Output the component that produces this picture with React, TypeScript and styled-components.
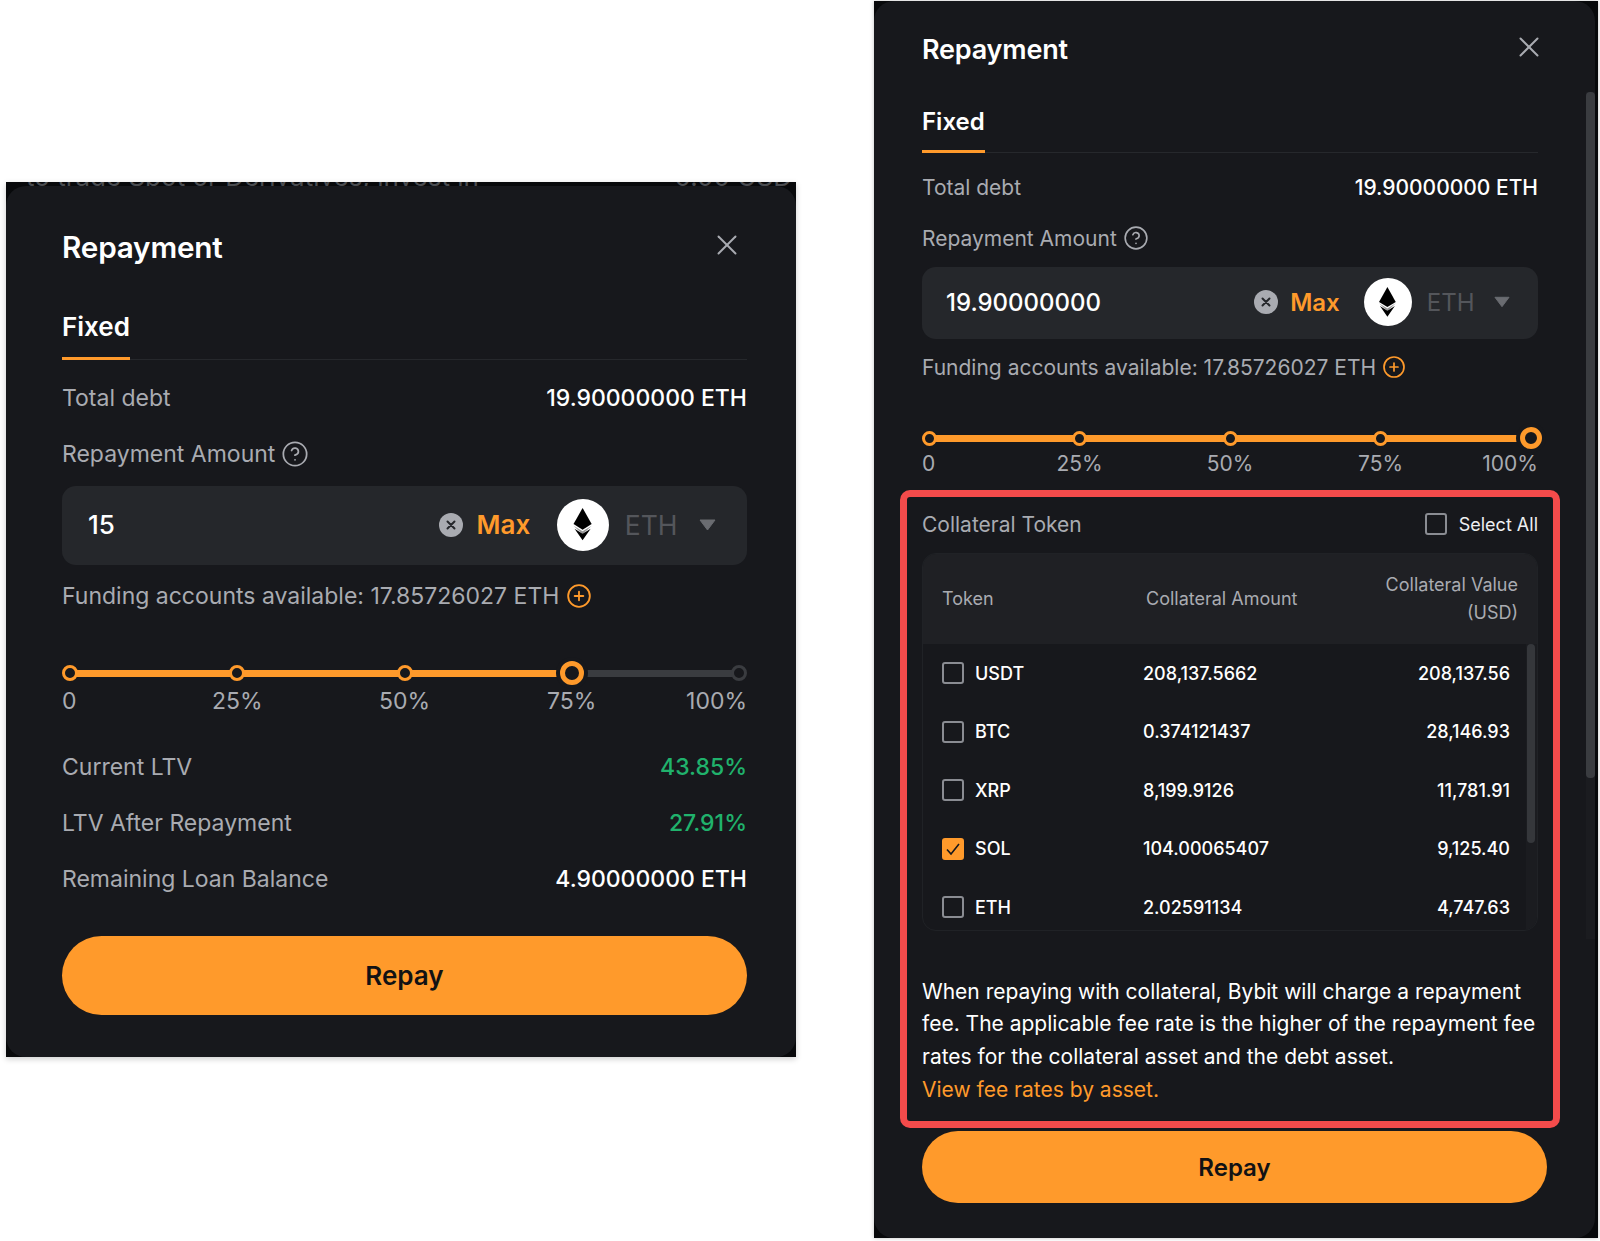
import { ThemeProvider, createGlobalStyle, styled } from "styled-components";
import { CircleHelp, CirclePlus, X } from "lucide-react";

const GlobalStyle = createGlobalStyle`
  html, body {
    margin: 0;
    background: #fff;
    font-family: Inter, "Liberation Sans", sans-serif;
  }
`;

const wide = {
  text: 23,
  title: 29.7,
  tab: 26,
  coinFont: 26.5,
  pad: "0 49px 42px 56px",
  rowH: 40,
  titleTop: 41,
  tabTop: 40,
  tabPad: 10,
  debtTop: 18,
  amountTop: 16,
  inputTop: 12,
  inputH: 79,
  inputPad: 26,
  inputRight: 31,
  clearGap: 13.5,
  maxGap: 26.5,
  coinGap: 16,
  nameGap: 21.5,
  caret: 17,
  fundTop: 11,
  fundGap: 7,
  sliderTop: 45,
  dot: 16,
  thumb: 24,
  sliderPad: 8,
  tickH: 30,
  tickShift: 2,
  icon: 52,
  btnH: 79,
  btnOver: 0,
  btnFont: 26,
  closeRight: 3,
};

const narrow = {
  ...wide,
  text: 21,
  title: 27,
  tab: 24,
  coinFont: 24,
  pad: "0 57px 35px 48px",
  rowH: 36,
  titleTop: 30,
  tabTop: 37,
  debtTop: 16,
  amountTop: 15,
  inputTop: 11,
  inputH: 72,
  inputPad: 24,
  inputRight: 28,
  clearGap: 12,
  maxGap: 24,
  coinGap: 15,
  nameGap: 19.5,
  caret: 16,
  fundTop: 10,
  fundGap: 6,
  sliderTop: 41,
  dot: 15,
  thumb: 22,
  sliderPad: 7,
  tickH: 26,
  tickShift: 0,
  icon: 48,
  btnH: 72,
  btnOver: 9,
  btnFont: 24,
  closeRight: -8,
};

const Page = styled.div`
  width: 1600px;
  height: 1241px;
  overflow: hidden;
  display: flex;
  align-items: flex-start;
`;

const LeftFrame = styled.div`
  margin: 182px 0 0 6px;
  width: 790px;
  padding-top: 4px;
  background: #08090b;
  position: relative;
  overflow: hidden;
  box-shadow: 0 2px 6px rgba(0, 0, 0, 0.2);
`;

const GhostText = styled.div`
  position: absolute;
  top: -20px;
  left: 20px;
  right: 4px;
  display: flex;
  justify-content: space-between;
  font-size: 26px;
  line-height: 30px;
  color: #4a4c50;
  white-space: nowrap;
`;

const RightFrame = styled.div`
  margin: 1px 0 0 78px;
  width: 724px;
  background: #08090b;
  position: relative;
  box-shadow: 0 0 4px rgba(0, 0, 0, 0.25);
`;

const Panel = styled.div`
  position: relative;
  background: #17181c;
  border-radius: 20px;
  padding: ${({ theme }) => theme.pad};
  color: #a9abb1;
  font-size: ${({ theme }) => theme.text}px;
`;

const RightPanel = styled(Panel)`
  margin-right: 3px;
`;

const PageScroll = styled.div`
  position: absolute;
  top: 91px;
  right: 3px;
  width: 9px;
  height: 847px;
  background: #1b1c20;
`;

const PageThumb = styled.div`
  height: 686px;
  border-radius: 4px;
  background: #3a3c40;
`;

const TitleRow = styled.div`
  display: flex;
  align-items: center;
  justify-content: space-between;
  height: ${({ theme }) => theme.rowH}px;
  padding-top: ${({ theme }) => theme.titleTop}px;
`;

const Title = styled.h2`
  margin: 0;
  font-size: ${({ theme }) => theme.title}px;
  font-weight: 600;
  letter-spacing: -0.2px;
  color: #fff;
`;

const CloseIcon = styled(X)`
  flex: none;
  margin: -4px ${({ theme }) => theme.closeRight}px 0 0;
  color: #a9abb1;
`;

const Tabs = styled.div`
  margin-top: ${({ theme }) => theme.tabTop}px;
  border-bottom: 1px solid #26282c;
  display: flex;
`;

const Tab = styled.div`
  height: ${({ theme }) => theme.rowH}px;
  line-height: ${({ theme }) => theme.rowH}px;
  padding-bottom: ${({ theme }) => theme.tabPad}px;
  border-bottom: 3px solid #ff9a2b;
  margin-bottom: -1px;
  font-size: ${({ theme }) => theme.tab}px;
  font-weight: 600;
  color: #fff;
`;

const Row = styled.div<{ $top?: number }>`
  display: flex;
  align-items: center;
  justify-content: space-between;
  height: ${({ theme }) => theme.rowH}px;
  margin-top: ${({ $top }) => $top ?? 16}px;
`;

const DebtRow = styled(Row)`
  margin-top: ${({ theme }) => theme.debtTop}px;
`;

const LabelRow = styled(Row)`
  justify-content: flex-start;
  gap: 6px;
  margin-top: ${({ theme }) => theme.amountTop}px;
`;

const Value = styled.span<{ $green?: boolean }>`
  font-weight: 500;
  color: ${({ $green }) => ($green ? "#20b26c" : "#fff")};
`;

const InputBox = styled.div`
  box-sizing: border-box;
  display: flex;
  align-items: center;
  height: ${({ theme }) => theme.inputH}px;
  margin-top: ${({ theme }) => theme.inputTop}px;
  padding: 0 ${({ theme }) => theme.inputRight}px 2px ${({ theme }) => theme.inputPad}px;
  background: #25272b;
  border-radius: 14px;
`;

const InputValue = styled.span`
  flex: 1;
  font-size: ${({ theme }) => theme.tab}px;
  font-weight: 500;
  color: #fff;
`;

const ClearDot = styled.svg`
  width: 24px;
  height: 24px;
  margin-right: ${({ theme }) => theme.clearGap}px;
`;

const MaxLink = styled.span`
  font-size: ${({ theme }) => theme.tab}px;
  font-weight: 600;
  color: #ff9a2b;
  margin-right: ${({ theme }) => theme.maxGap}px;
`;

const CoinBadge = styled.span`
  width: ${({ theme }) => theme.icon}px;
  height: ${({ theme }) => theme.icon}px;
  border-radius: 50%;
  background: #fff;
  display: flex;
  align-items: center;
  justify-content: center;
  margin-right: ${({ theme }) => theme.coinGap}px;
`;

const CoinName = styled.span`
  font-size: ${({ theme }) => theme.coinFont}px;
  color: #54565b;
  margin-right: ${({ theme }) => theme.nameGap}px;
`;

const Caret = styled.svg`
  width: ${({ theme }) => theme.caret}px;
  height: 12px;
`;

const FundRow = styled(Row)`
  justify-content: flex-start;
  gap: ${({ theme }) => theme.fundGap}px;
  margin-top: ${({ theme }) => theme.fundTop}px;
`;

const PlusIcon = styled(CirclePlus)`
  color: #ff9a2b;
`;

const Slider = styled.div`
  display: flex;
  align-items: center;
  height: 24px;
  margin-top: ${({ theme }) => theme.sliderTop}px;
  padding: 0 ${({ theme }) => theme.sliderPad}px;
`;

const Segment = styled.div<{ $on: boolean }>`
  flex: 1;
  height: 7px;
  background: ${({ $on }) => ($on ? "#ff9a2b" : "#3a3c40")};
`;

const Stop = styled.div`
  width: 0;
  display: flex;
  justify-content: center;
  position: relative;
  z-index: 1;
`;

const Dot = styled.div<{ $on: boolean; $thumb: boolean }>`
  flex: none;
  box-sizing: border-box;
  width: ${({ theme, $thumb }) => ($thumb ? theme.thumb : theme.dot)}px;
  height: ${({ theme, $thumb }) => ($thumb ? theme.thumb : theme.dot)}px;
  border-radius: 50%;
  background: #17181c;
  border: ${({ $thumb }) => ($thumb ? 5 : 3)}px solid ${({ $on }) => ($on ? "#ff9a2b" : "#3a3c40")};
  box-shadow: ${({ $thumb }) => ($thumb ? "0 0 0 4px #17181c" : "none")};
`;

const Ticks = styled.div`
  box-sizing: border-box;
  display: flex;
  justify-content: space-between;
  align-items: center;
  height: ${({ theme }) => theme.tickH}px;
  padding: ${({ theme }) => theme.tickShift}px ${({ theme }) => theme.sliderPad}px 0;
`;

const Tick = styled.span<{ $align: string }>`
  width: 0;
  display: flex;
  justify-content: ${({ $align }) => $align};
  white-space: nowrap;
`;

const FirstTick = styled(Tick)`
  position: relative;
  left: -${({ theme }) => theme.sliderPad}px;
`;

const LastTick = styled(Tick)`
  position: relative;
  left: ${({ theme }) => theme.sliderPad}px;
`;

const RepayButton = styled.button<{ $top: number }>`
  display: block;
  box-sizing: content-box;
  width: calc(100% + ${({ theme }) => theme.btnOver}px);
  height: ${({ theme }) => theme.btnH}px;
  margin-top: ${({ $top }) => $top}px;
  padding: 0;
  border: 0;
  border-radius: 40px;
  background: #ff9a2b;
  color: #121214;
  font: 600 ${({ theme }) => theme.btnFont}px Inter, sans-serif;
`;

const Highlight = styled.section`
  margin: 14px -22px 0 -22px;
  height: 638px;
  box-sizing: border-box;
  border: 7px solid #f44b4b;
  border-radius: 10px;
  padding: 9px 15px 0 15px;
`;

const CollateralHead = styled.div`
  display: flex;
  align-items: center;
  justify-content: space-between;
  height: 36px;
`;

const SelectAll = styled.label`
  display: flex;
  align-items: center;
  gap: 12px;
  font-size: 18px;
  color: #eeeff1;
`;

const Check = styled.span<{ $on?: boolean }>`
  box-sizing: border-box;
  flex: none;
  width: 22px;
  height: 22px;
  border-radius: 3px;
  border: 2px solid ${({ $on }) => ($on ? "#ff9a2b" : "#8a8c92")};
  background: ${({ $on }) => ($on ? "#ff9a2b" : "transparent")};
  display: flex;
  align-items: center;
  justify-content: center;
`;

const Table = styled.div`
  position: relative;
  margin-top: 11px;
  height: 378px;
  box-sizing: border-box;
  border: 1px solid #202226;
  border-radius: 14px;
  overflow: hidden;
`;

const TableHead = styled.div`
  box-sizing: border-box;
  display: grid;
  grid-template-columns: 204px 1fr auto;
  align-items: center;
  height: 90px;
  padding: 0 19px 1px;
  background: #1f2024;
  font-size: 18px;
  line-height: 27.5px;
`;

const ValueHead = styled.div`
  text-align: right;
`;

const TableBody = styled.div`
  margin: 0 10px 0 0;
`;

const TokenRow = styled.div`
  display: grid;
  grid-template-columns: 201px 1fr auto;
  align-items: center;
  height: 58.5px;
  padding: 0 17px 0 19px;
  color: #fff;
  font-size: 18px;
  font-weight: 500;
`;

const TokenCell = styled.div`
  display: flex;
  align-items: center;
  gap: 11px;
`;

const TableScroll = styled.div`
  position: absolute;
  top: 90px;
  bottom: 0;
  right: 0;
  width: 11px;
  background: #1b1c20;
`;

const TableThumb = styled.div`
  width: 8px;
  margin-left: 1px;
  height: 199px;
  border-radius: 4px;
  background: #35373b;
`;

const Note = styled.p`
  margin: 44.5px 0 0;
  font-size: 21px;
  line-height: 32.9px;
  color: #fff;
`;

const NoteLink = styled.a`
  display: block;
  color: #ff9a2b;
`;

const tokens = [
  ["USDT", "208,137.5662", "208,137.56", false],
  ["BTC", "0.374121437", "28,146.93", false],
  ["XRP", "8,199.9126", "11,781.91", false],
  ["SOL", "104.00065407", "9,125.40", true],
  ["ETH", "2.02591134", "4,747.63", false],
] as const;

const ticks = ["0", "25%", "50%", "75%", "100%"];

function CoinMark({ size }: { size: number }) {
  return (
    <svg width={size * 0.6} height={size * 0.62} viewBox="0 0 20 32">
      <path d="M10 0 19 16 10 21.5 1 16Z" fill="#000" />
      <path d="M1 17.5 10 23 19 17.5 10 26Z" fill="#999" />
      <path d="M10 32 2 20.5 10 25.5 18 20.5Z" fill="#000" />
    </svg>
  );
}

function SliderStop({ i, at }: { i: number; at: number }) {
  return (
    <>
      {i > 0 && <Segment $on={i <= at} />}
      <Stop>
        <Dot $on={i <= at} $thumb={i === at} />
      </Stop>
    </>
  );
}

function RepaySlider({ at }: { at: number }) {
  return (
    <>
      <Slider>
        {ticks.map((t, i) => (
          <SliderStop key={t} i={i} at={at} />
        ))}
      </Slider>
      <Ticks>
        <FirstTick $align="flex-start">0</FirstTick>
        <Tick $align="center">25%</Tick>
        <Tick $align="center">50%</Tick>
        <Tick $align="center">75%</Tick>
        <LastTick $align="flex-end">100%</LastTick>
      </Ticks>
    </>
  );
}

function RepayHeader({ amount, large }: { amount: string; large: boolean }) {
  return (
    <>
      <TitleRow>
        <Title>Repayment</Title>
        <CloseIcon size={34} strokeWidth={1.4} />
      </TitleRow>
      <Tabs>
        <Tab>Fixed</Tab>
      </Tabs>
      <DebtRow>
        <span>Total debt</span>
        <Value>19.90000000 ETH</Value>
      </DebtRow>
      <LabelRow>
        <span>Repayment Amount</span>
        <CircleHelp size={large ? 28 : 26} strokeWidth={1.5} />
      </LabelRow>
      <InputBox>
        <InputValue>{amount}</InputValue>
        <ClearDot viewBox="0 0 24 24">
          <circle cx="12" cy="12" r="12" fill="#a9abb1" />
          <path d="M8.5 8.5 15.5 15.5M15.5 8.5 8.5 15.5" stroke="#25272b" strokeWidth="2" strokeLinecap="round" />
        </ClearDot>
        <MaxLink>Max</MaxLink>
        <CoinBadge>
          <CoinMark size={large ? 52 : 48} />
        </CoinBadge>
        <CoinName>ETH</CoinName>
        <Caret viewBox="0 0 17 12">
          <path d="M1 1h15L8.5 11Z" fill="#6a6c71" stroke="#6a6c71" strokeLinejoin="round" />
        </Caret>
      </InputBox>
      <FundRow>
        <span>Funding accounts available: 17.85726027 ETH</span>
        <PlusIcon size={large ? 26 : 24} strokeWidth={1.7} />
      </FundRow>
    </>
  );
}

export default function App() {
  return (
    <Page>
      <GlobalStyle />
      <ThemeProvider theme={wide}>
        <LeftFrame>
          <GhostText>
            <span>to trade Spot or Derivatives, invest in</span>
            <span>0.00 USD</span>
          </GhostText>
          <Panel>
            <RepayHeader amount="15" large />
            <RepaySlider at={3} />
            <Row $top={32}>
              <span>Current LTV</span>
              <Value $green>43.85%</Value>
            </Row>
            <Row>
              <span>LTV After Repayment</span>
              <Value $green>27.91%</Value>
            </Row>
            <Row>
              <span>Remaining Loan Balance</span>
              <Value>4.90000000 ETH</Value>
            </Row>
            <RepayButton $top={37}>Repay</RepayButton>
          </Panel>
        </LeftFrame>
      </ThemeProvider>
      <ThemeProvider theme={narrow}>
        <RightFrame>
          <RightPanel>
            <RepayHeader amount="19.90000000" large={false} />
            <RepaySlider at={4} />
            <Highlight>
              <CollateralHead>
                <span>Collateral Token</span>
                <SelectAll>
                  <Check />
                  Select All
                </SelectAll>
              </CollateralHead>
              <Table>
                <TableHead>
                  <span>Token</span>
                  <span>Collateral Amount</span>
                  <ValueHead>
                    Collateral Value
                    <br />
                    (USD)
                  </ValueHead>
                </TableHead>
                <TableBody>
                  {tokens.map(([name, amount, usd, on]) => (
                    <TokenRow key={name}>
                      <TokenCell>
                        <Check $on={on}>
                          {on && (
                            <svg width="16" height="14" viewBox="0 0 16 14">
                              <path d="M2 7.5 6 12 14 2" fill="none" stroke="#17181c" strokeWidth="1.6" />
                            </svg>
                          )}
                        </Check>
                        {name}
                      </TokenCell>
                      <span>{amount}</span>
                      <span>{usd}</span>
                    </TokenRow>
                  ))}
                </TableBody>
                <TableScroll>
                  <TableThumb />
                </TableScroll>
              </Table>
              <Note>
                When repaying with collateral, Bybit will charge a repayment fee. The applicable fee rate is the higher of the repayment fee rates for the collateral asset and the debt asset.
                <NoteLink>View fee rates by asset.</NoteLink>
              </Note>
            </Highlight>
            <RepayButton $top={3}>Repay</RepayButton>
          </RightPanel>
          <PageScroll>
            <PageThumb />
          </PageScroll>
        </RightFrame>
      </ThemeProvider>
    </Page>
  );
}
